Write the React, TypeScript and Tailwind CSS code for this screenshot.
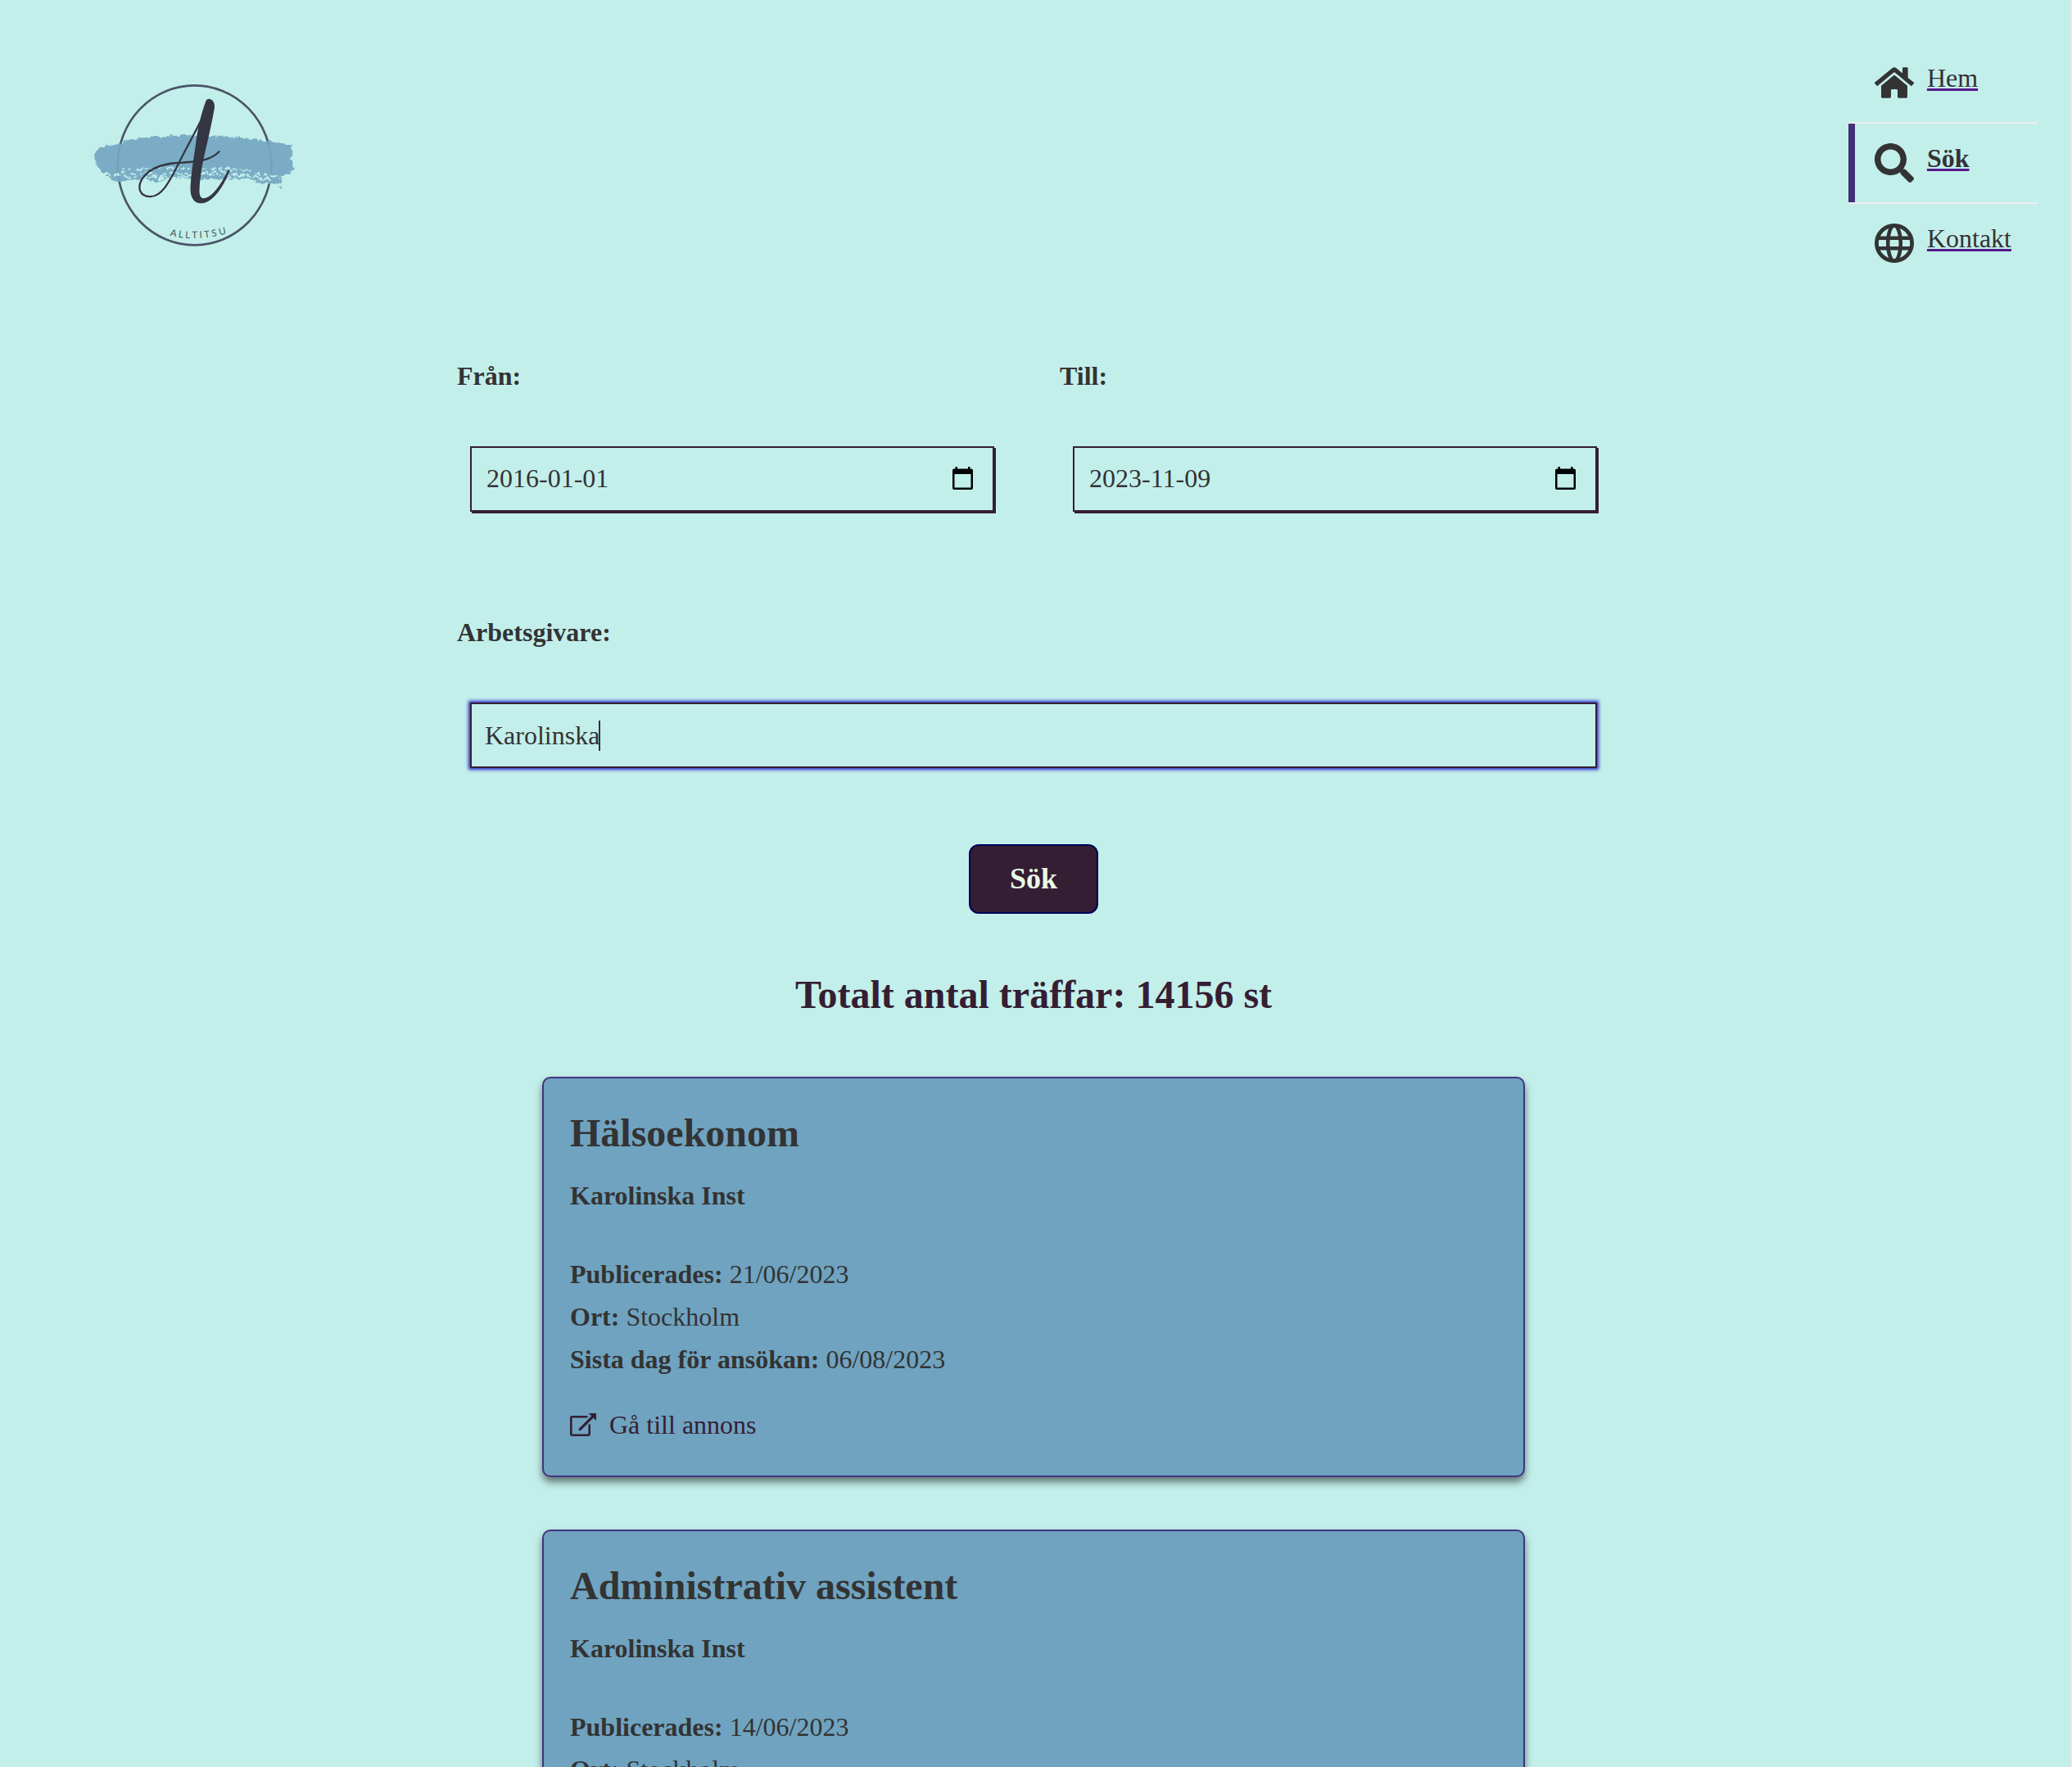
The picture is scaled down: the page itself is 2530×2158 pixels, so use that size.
import React, { useState } from "react";
import { FaHome, FaSearch } from "react-icons/fa";

function Logo() {
  return (
    <svg viewBox="60 60 760 610" className="h-[203px] w-[253px]" role="img" aria-label="Alltitsu">
      <defs>
        <filter id="rough" x="-5%" y="-20%" width="110%" height="140%">
          <feTurbulence type="fractalNoise" baseFrequency="0.06" numOctaves={3} seed={4} result="n" />
          <feDisplacementMap in="SourceGraphic" in2="n" scale={22} xChannelSelector="R" yChannelSelector="G" />
        </filter>
        <path id="arc" d="M352 624 Q443 646 548 620" />
      </defs>
      <ellipse cx="443" cy="366" rx="282" ry="293" fill="none" stroke="#4a5566" strokeWidth="8" />
      <g opacity="0.93" transform="translate(-1 -1)">
        <g filter="url(#rough)">
          <path
            d="M72 335 L88 308 L125 293 L180 283 L215 269 L300 262 L400 256 L520 260 L620 266 L700 277 L796 290 L804 322 L800 350 L810 380 L794 396 L766 404 L760 432 L726 436 L664 430 L640 414 L560 420 L490 416 L440 420 L400 412 L330 420 L290 428 L264 414 L220 420 L160 428 L120 408 L126 398 L100 388 L86 368 Z"
            fill="#75a9c3"
          />
          <g fill="none" stroke="#c3efeb" strokeLinecap="round">
            <path d="M176 386 L300 378 L420 380 L560 380 L660 388" strokeWidth="6" strokeDasharray="16 12 5 22 26 9 3 17" />
            <path d="M130 402 L240 398 L380 396 L470 400 L560 402 L680 400 L760 412" strokeWidth="6" strokeDasharray="7 15 20 13 4 24 12 19" />
            <path d="M190 412 L300 408 L420 408 L520 388 L640 406 L720 418" strokeWidth="6" strokeDasharray="22 14 6 21 12 9 30 16" />
            <path d="M205 424 L262 420 M310 416 L370 412 M560 414 L620 400 M650 424 L700 420" strokeWidth="7" strokeDasharray="20 12 9 8" />
          </g>
          <path d="M758 442 L762 450" stroke="#75a9c3" strokeWidth="8" />
        </g>
      </g>
      <path
        d="M470 195 C440 255 412 305 386 357 C358 410 328 482 280 481 C240 480 232 446 252 414 C284 366 350 358 400 356 C450 352 500 350 533 316"
        fill="none"
        stroke="#343644"
        strokeWidth="7"
        strokeLinecap="round"
      />
      <path
        d="M495 122 C510 122 519 138 516 156 C508 205 496 255 486 300 C474 350 462 410 461 462 C462 482 468 489 480 487 C510 482 545 430 566 382 L573 384 C553 436 520 494 476 505 C444 510 427 488 428 448 C430 400 438 350 446 300 C452 250 460 200 483 134 C486 126 490 122 495 122 Z"
        fill="#343644"
      />
      <text fontFamily="Lato, sans-serif" fontSize="35" fill="#3f5a58">
        <textPath href="#arc">A L L T I T S U</textPath>
      </text>
    </svg>
  );
}

function GlobeIcon() {
  return (
    <svg viewBox="0 0 48 48" className="size-12 shrink-0" fill="none" stroke="currentColor" aria-hidden="true">
      <circle cx="24" cy="24" r="21.6" strokeWidth="4.8" />
      <ellipse cx="24" cy="24" rx="7.8" ry="21.6" strokeWidth="4.5" />
      <path d="M3 17.8H45M3 30.2H45" strokeWidth="4.5" />
    </svg>
  );
}

function CalendarIcon() {
  return (
    <svg viewBox="0 0 25 28" className="h-7 w-[25px]" aria-hidden="true">
      <path
        fillRule="evenodd"
        fill="#000"
        d="M3.5 0H6V2.5H19V0H21.5V2.5H23A2 2 0 0 1 25 4.5V26A2 2 0 0 1 23 28H2A2 2 0 0 1 0 26V4.5A2 2 0 0 1 2 2.5H3.5ZM2.5 9V25.4H22.5V9Z"
      />
    </svg>
  );
}

function ExternalIcon() {
  return (
    <svg viewBox="0 0 32 32" className="size-8 shrink-0" fill="none" stroke="currentColor" aria-hidden="true">
      <path d="M21.5 5.3H2.4A1.1 1.1 0 0 0 1.3 6.4V26.6A1.1 1.1 0 0 0 2.4 27.7H22.6A1.1 1.1 0 0 0 23.7 26.6V14.5" strokeWidth="2.6" />
      <path d="M12.2 20.6L27 5.8" strokeWidth="3.2" strokeLinecap="round" />
      <path d="M22.6 1H32V10Z" fill="currentColor" stroke="none" />
    </svg>
  );
}

const navItem = "flex items-start gap-4 border-l-8 py-6 pr-8 pl-6";
const navLink = "underline decoration-[#551a8b] decoration-[3px] underline-offset-2";

function Nav() {
  return (
    <nav aria-label="Huvudmeny">
      <ul className="divide-y-2 divide-[#ededed]">
        <li>
          <div className={`${navItem} border-transparent`}>
            <FaHome className="size-12 shrink-0" aria-hidden="true" />
            <a href="#hem" className={navLink}>Hem</a>
          </div>
        </li>
        <li>
          <div className={`${navItem} border-[#423079]`}>
            <FaSearch className="size-12 shrink-0" aria-hidden="true" />
            <a href="#sok" aria-current="page" className={`${navLink} font-bold`}>Sök</a>
          </div>
        </li>
        <li>
          <div className={`${navItem} border-transparent`}>
            <GlobeIcon />
            <a href="#kontakt" className={navLink}>Kontakt</a>
          </div>
        </li>
      </ul>
    </nav>
  );
}

function DateField({ id, label, initial }: { id: string; label: string; initial: string }) {
  const [value, setValue] = useState(initial);
  return (
    <div>
      <label htmlFor={id} className="block font-bold">{label}</label>
      <div className="mx-4 mt-[67px] flex h-20 items-center border-2 border-[#351e33] pr-6 pl-[18px] shadow-[2px_2px_0_#351e33]">
        <input
          id={id}
          type="text"
          inputMode="numeric"
          value={value}
          onChange={(e) => setValue(e.target.value)}
          className="min-w-0 flex-1 bg-transparent pb-0.5 outline-none"
        />
        <button type="button" aria-label={`Välj datum, ${label}`} className="pb-0.5">
          <CalendarIcon />
        </button>
      </div>
    </div>
  );
}

type Job = { title: string; employer: string; published: string; city: string; deadline: string };

const jobs: Job[] = [
  { title: "Hälsoekonom", employer: "Karolinska Inst", published: "21/06/2023", city: "Stockholm", deadline: "06/08/2023" },
  { title: "Administrativ assistent", employer: "Karolinska Inst", published: "14/06/2023", city: "Stockholm", deadline: "06/08/2023" },
];

function JobCard({ job }: { job: Job }) {
  return (
    <article className="rounded-[10px] border-2 border-[#44337f] bg-[#6fa3c0] px-8 pt-[39px] pb-[43px] shadow-[0_6px_10px_rgba(0,0,0,0.5)]">
      <h2 className="text-5xl leading-[55px] font-bold">{job.title}</h2>
      <h3 className="mt-[31px] font-bold">{job.employer}</h3>
      <div className="mt-[51px] leading-[52px]">
        <p><strong>Publicerades:</strong> {job.published}</p>
        <p><strong>Ort:</strong> {job.city}</p>
        <p><strong>Sista dag för ansökan:</strong> {job.deadline}</p>
      </div>
      <a href="#annons" className="mt-9 flex w-fit items-center gap-4 text-[#351e33]">
        <ExternalIcon />
        Gå till annons
      </a>
    </article>
  );
}

export default function App() {
  const [employer, setEmployer] = useState("Karolinska");
  return (
    <div className="h-screen overflow-hidden border-r-2 border-[#e8e8e8] bg-[#c3efeb] font-['Liberation_Serif',serif] text-[32px] leading-[37px] text-[#333]">
      <header className="flex items-start justify-between pt-[53px] pr-10 pl-[110px]">
        <div className="pt-[47px]">
          <Logo />
        </div>
        <Nav />
      </header>
      <main className="pt-24 pr-1">
        <form onSubmit={(e) => e.preventDefault()} className="mx-auto flex max-w-[1408px] flex-col">
          <div className="grid grid-cols-2 gap-16">
            <DateField id="from" label="Från:" initial="2016-01-01" />
            <DateField id="to" label="Till:" initial="2023-11-09" />
          </div>
          <label htmlFor="employer" className="mt-[129px] font-bold">Arbetsgivare:</label>
          <div className="relative mx-4 mt-[67px]">
            <input
              id="employer"
              type="text"
              value={employer}
              onChange={(e) => setEmployer(e.target.value)}
              className="block h-20 w-full border-2 border-[#351e33] bg-transparent px-4 caret-transparent shadow-[0_0_4px_2px_#2a2ac8] outline-none"
            />
            <span aria-hidden="true" className="absolute top-[22px] left-[157px] h-[37px] w-0.5 bg-[#333]" />
          </div>
          <button
            type="submit"
            className="mt-[93px] self-center rounded-xl border-2 border-[#000058] bg-[#351e33] px-12 py-5 text-4xl leading-[41px] font-bold text-[#e9fde5]"
          >
            Sök
          </button>
        </form>
        <h1 className="mt-[71px] text-center text-5xl leading-[55px] font-bold text-[#351e33]">Totalt antal träffar: 14156 st</h1>
        <section aria-label="Träffar" className="mx-auto mt-[73px] flex max-w-[1200px] flex-col gap-16">
          {jobs.map((job) => (
            <JobCard key={job.title} job={job} />
          ))}
        </section>
      </main>
    </div>
  );
}
